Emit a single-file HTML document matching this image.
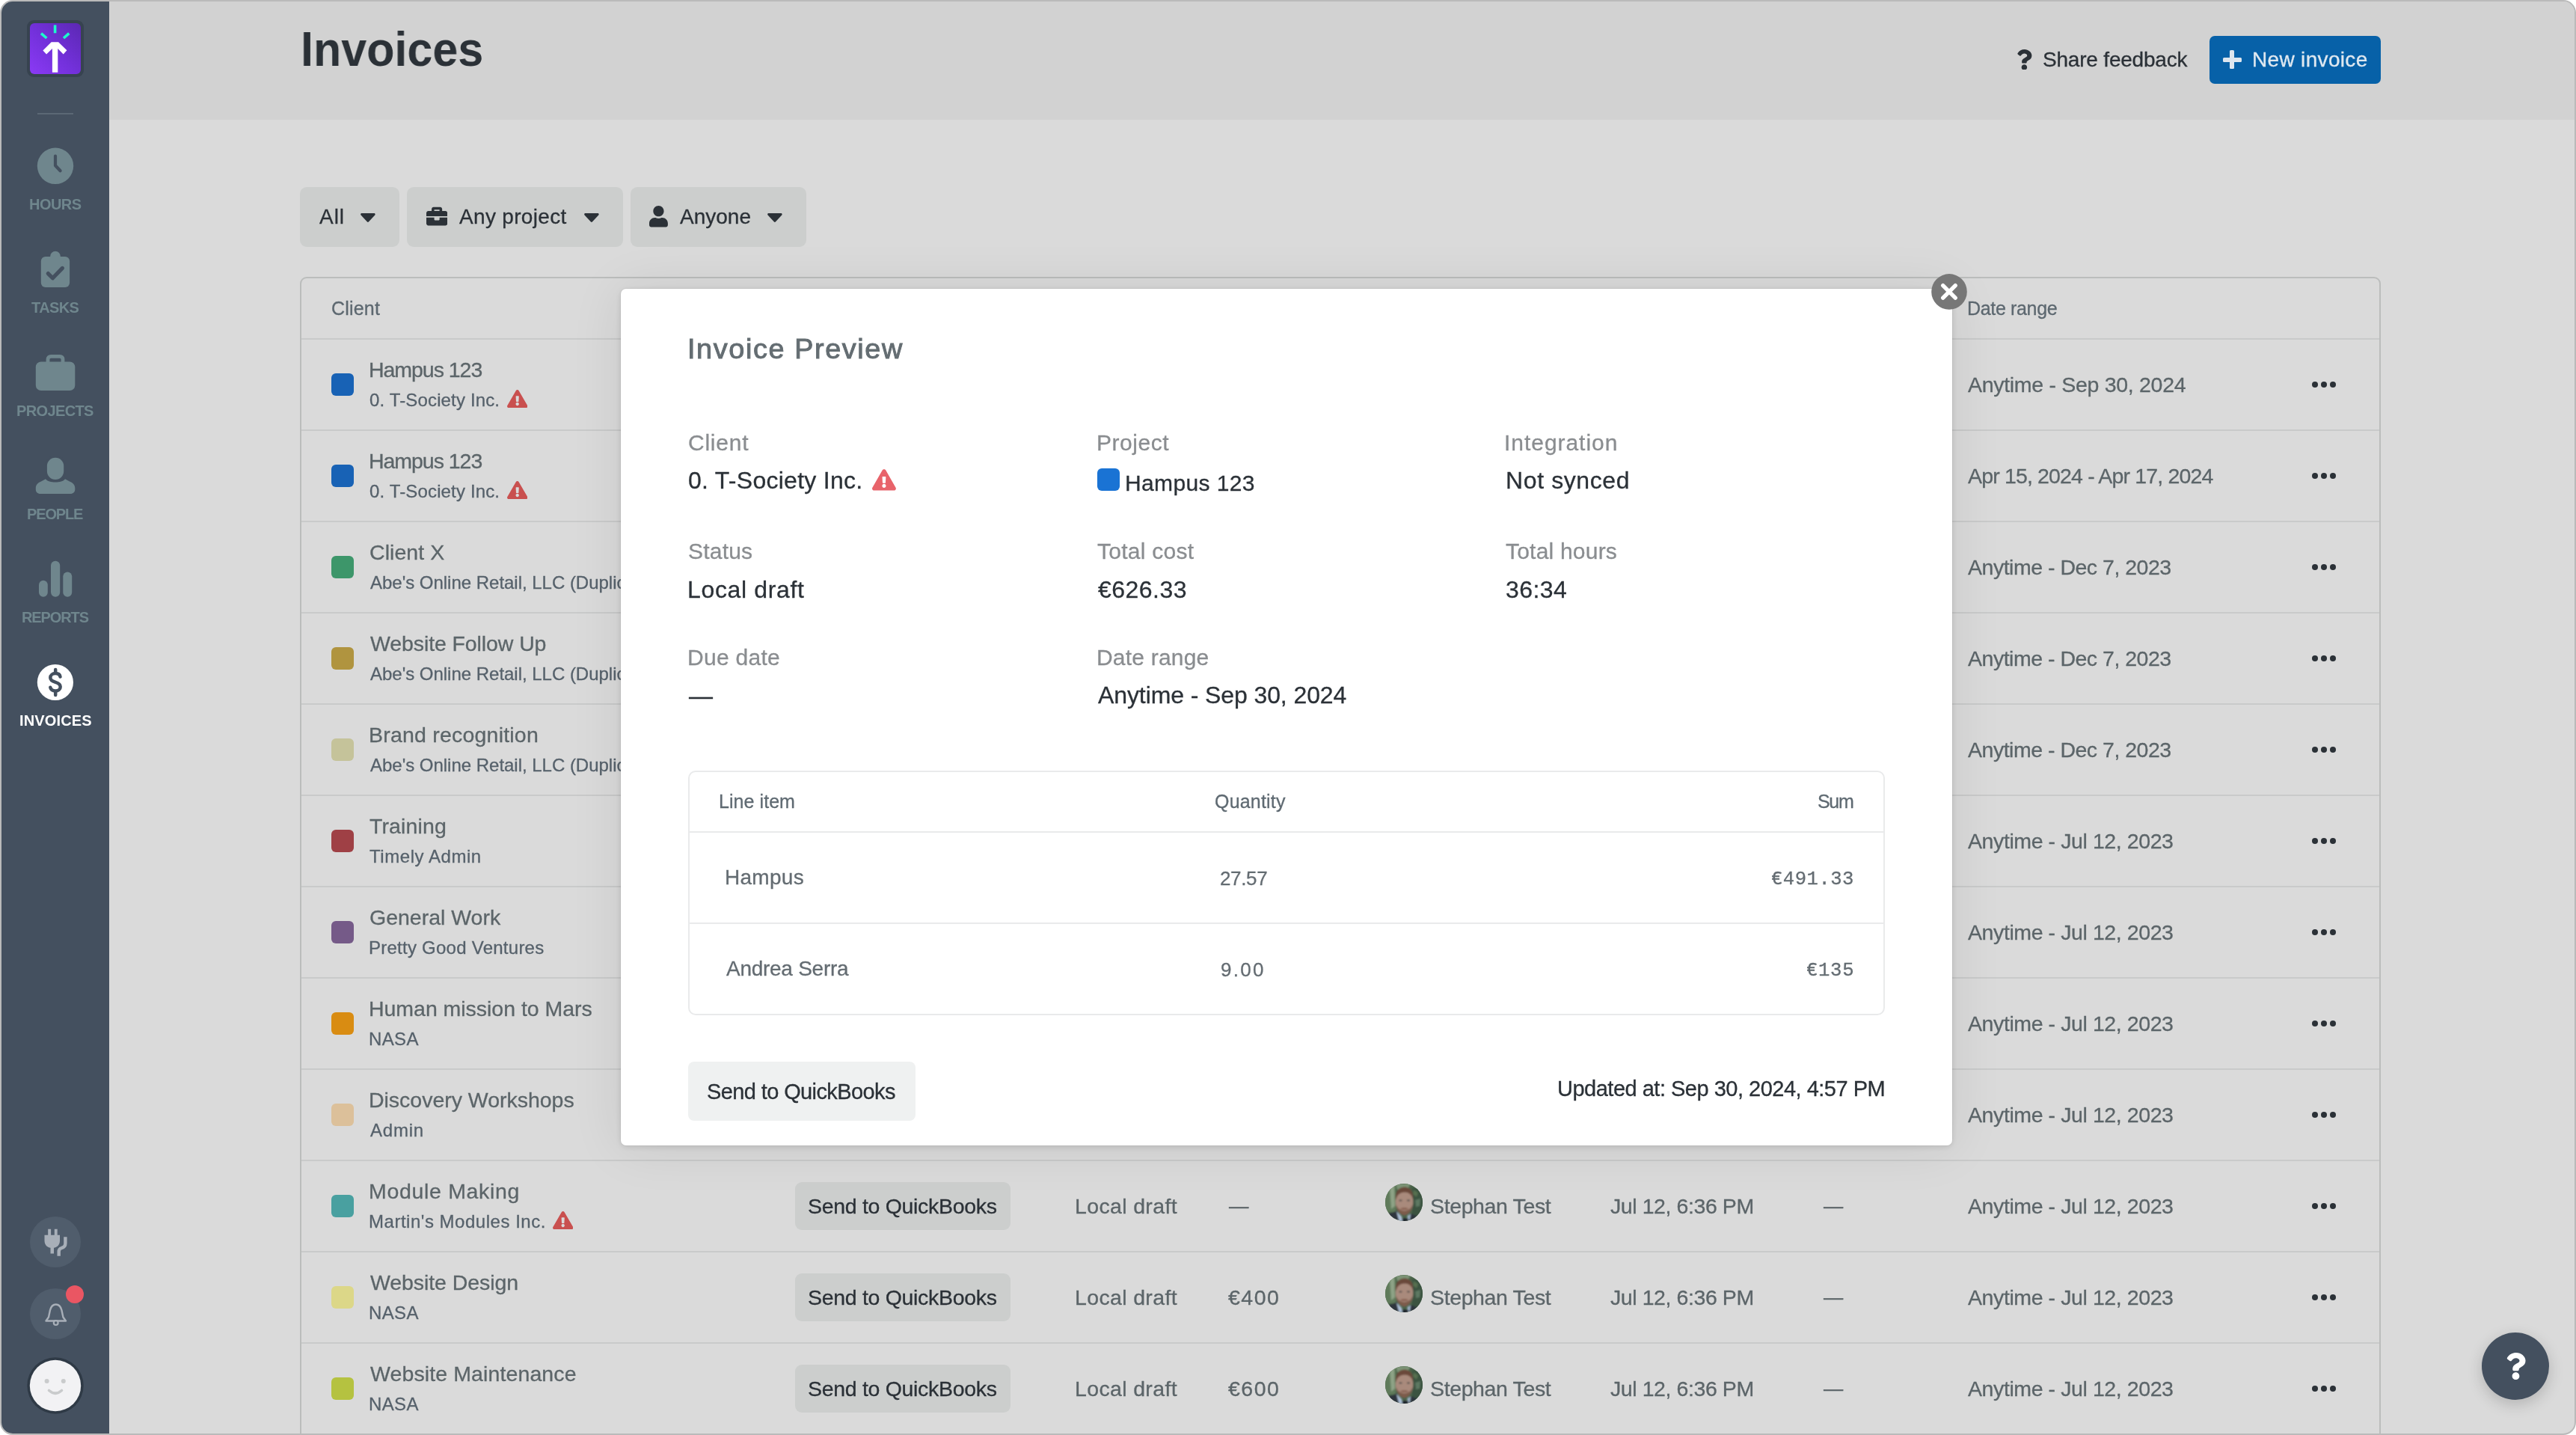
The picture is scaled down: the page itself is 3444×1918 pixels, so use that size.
<!DOCTYPE html>
<html><head><meta charset="utf-8"><title>Invoices</title>
<style>
html,body{margin:0;padding:0;background:#fff;}
body{width:3444px;height:1918px;overflow:hidden;position:relative;font-family:"Liberation Sans",sans-serif;}
.b{position:absolute;box-sizing:border-box;}
.t{position:absolute;white-space:nowrap;will-change:transform;-webkit-text-stroke:0.3px;}
.nb{-webkit-text-stroke:0;}
#frame{position:absolute;left:0;top:0;width:3444px;height:1918px;background:#bababa;border-radius:17px;}
#win{position:absolute;left:0;top:0;width:3444px;height:1918px;background:#dadada;clip-path:inset(2px round 15px);overflow:hidden;}
</style></head><body>
<div id="frame"></div>
<div id="win">

<div class="b" style="left:146px;top:0px;width:3298px;height:160px;background:#d2d2d2;"></div>
<div class="b" style="left:0px;top:0px;width:146px;height:1918px;background:#44505f;"></div>
<div class="b" style="left:36px;top:27px;width:76px;height:76px;background:#374350;border-radius:9px;"></div>
<div class="b" style="left:40px;top:31px;width:68px;height:68px;background:linear-gradient(45deg,#8b3af5 0%,#7431dc 45%,#5b28b3 100%);border-radius:6px;"></div>
<svg class="b" style="left:40px;top:31px" width="68" height="68" viewBox="0 0 68 68">
<g stroke="#1cfccb" stroke-width="3.6" fill="none"><path d="M33.6 2.5V13.3"/><path d="M15 13.6L22.4 20"/><path d="M52.3 13.6L45 20"/></g>
<path fill="#fff" d="M29.9 65.8V34L22.1 41.6 17.4 36.5 28.7 25.2H38.1L49.4 36.3 44.7 41.6 37.3 34V65.8Z"/>
</svg>
<div class="b" style="left:50px;top:150.5px;width:48px;height:2px;background:#5b6875;"></div>
<svg class="b" style="left:48px;top:196px" width="52" height="52" viewBox="0 0 52 52"><circle cx="26" cy="25.8" r="24.2" fill="#6f868d"/><path d="M26 12.5V25.2L32.6 32.2" stroke="#44505f" stroke-width="4.2" stroke-linecap="round" stroke-linejoin="round" fill="none"/></svg>
<div class="t nb" style="left:39.0px;top:260px;font-size:20px;line-height:26px;color:#6f868d;letter-spacing:-0.55px;font-weight:700;">HOURS</div>
<svg class="b" style="left:50px;top:332px" width="48" height="56" viewBox="0 0 48 56"><circle cx="24" cy="10.6" r="6.8" fill="#6f868d"/><rect x="4.8" y="11" width="38.3" height="41" rx="6" fill="#6f868d"/><path d="M14.3 33.6L20.4 39.8L33.4 26.4" stroke="#44505f" stroke-width="5.2" stroke-linecap="round" stroke-linejoin="round" fill="none"/></svg>
<div class="t nb" style="left:42.2px;top:398px;font-size:20px;line-height:26px;color:#6f868d;letter-spacing:-0.59px;font-weight:700;">TASKS</div>
<svg class="b" style="left:44px;top:470px" width="60" height="56" viewBox="0 0 60 56"><rect x="3.8" y="13.5" width="52.5" height="38.5" rx="7" fill="#6f868d"/><path d="M20 15V10.5Q20 6.3 24.2 6.3H35.8Q40 6.3 40 10.5V15" stroke="#6f868d" stroke-width="4.8" fill="none"/></svg>
<div class="t nb" style="left:22.0px;top:536px;font-size:20px;line-height:26px;color:#6f868d;letter-spacing:-0.62px;font-weight:700;">PROJECTS</div>
<svg class="b" style="left:44px;top:606px" width="60" height="58" viewBox="0 0 60 58"><path fill="#6f868d" d="M3.8 46.5C3.8 42 6.5 39.5 11 37.5L17 34.2C21 40 39 40 43 34.2L49 37.5C53.5 39.5 56.3 42 56.3 46.5V48C56.3 51.5 54 54 50 54H10C6 54 3.8 51.5 3.8 48Z"/><rect x="16.2" y="3" width="27.7" height="34.8" rx="13.8" fill="#44505f"/><rect x="18.9" y="5.7" width="22.3" height="29.2" rx="11.1" fill="#6f868d"/></svg>
<div class="t nb" style="left:36.1px;top:674px;font-size:20px;line-height:26px;color:#6f868d;letter-spacing:-1.14px;font-weight:700;">PEOPLE</div>
<svg class="b" style="left:48px;top:746px" width="52" height="56" viewBox="0 0 52 56"><rect x="4" y="29.7" width="11.8" height="22" rx="5.9" fill="#6f868d"/><rect x="20" y="3.7" width="12.2" height="48" rx="6.1" fill="#6f868d"/><rect x="36.3" y="18.4" width="11.9" height="33.3" rx="5.95" fill="#6f868d"/></svg>
<div class="t nb" style="left:28.9px;top:812px;font-size:20px;line-height:26px;color:#6f868d;letter-spacing:-1.11px;font-weight:700;">REPORTS</div>
<svg class="b" style="left:48px;top:886px" width="52" height="52" viewBox="0 0 52 52"><circle cx="25.9" cy="26" r="24.1" fill="#fff"/><g stroke="#44505f" stroke-width="4.5" stroke-linecap="round" fill="none"><path d="M32.5 18.5C32 15.5 29.5 14.1 26.2 14.1C22.3 14.1 19.3 16.3 19.3 19.8C19.3 23.3 22.5 24.8 26.2 25.9C30 27 32.7 28.6 32.7 32C32.7 35.5 29.8 37.5 26.2 37.5C22.6 37.5 20 35.8 19.3 32.8"/><path d="M26.2 8.9V12.5M26.2 39.3V43"/></g></svg>
<div class="t nb" style="left:25.8px;top:950px;font-size:20px;line-height:26px;color:#fff;letter-spacing:0.14px;font-weight:700;">INVOICES</div>
<svg class="b" style="left:40px;top:1626px" width="68" height="68" viewBox="0 0 68 68"><circle cx="34" cy="34" r="34" fill="#505d6c"/>
<path fill="#a8afb8" d="M24.2 16.7h3.9v8h4.7v-8h3.9v8h3.3v7.5c0 5.5-3.6 9-8 9.6v7.8h-4.5v-7.8c-4.4-.6-8-4.100-8-9.600v-7.500h4.700z"/>
<path d="M47.4 27.300v8.500q0 5-5 6.200q-3.700 1-3.700 5v5.800" stroke="#a8afb8" stroke-width="4.400" fill="none"/></svg>
<svg class="b" style="left:40px;top:1721.700px" width="68" height="68" viewBox="0 0 68 68"><circle cx="34" cy="34" r="34" fill="#505d6c"/>
<path d="M21.500 43.500L25 38.500L27 29Q29 21.500 34.700 21.500Q40.400 21.500 42.400 29L44.400 38.500L48 43.500Z" stroke="#a8afb8" stroke-width="2.400" fill="none" stroke-linejoin="round"/><circle cx="34.700" cy="46.100" r="2.900" stroke="#a8afb8" stroke-width="2.200" fill="#505d6c"/></svg>
<div class="b" style="left:88px;top:1718px;width:24px;height:24px;border-radius:12px;background:#ea5663"></div>
<svg class="b" style="left:34px;top:1812px" width="80" height="80" viewBox="0 0 80 80"><circle cx="40" cy="40" r="37.700" fill="#2f3a46"/><circle cx="40" cy="40" r="34.200" fill="#f2f2f4"/><circle cx="28.600" cy="34" r="3" fill="#c9cbcc"/><circle cx="50.800" cy="34" r="3" fill="#c9cbcc"/><path d="M31.500 46.500Q40 54 48.500 46.500" stroke="#c9cbcc" stroke-width="3.600" fill="none" stroke-linecap="round"/></svg>
<div class="t nb" style="left:401.7px;top:23px;font-size:65.6px;line-height:85px;color:#2b3137;transform:scaleX(0.9305);transform-origin:0 50%;font-weight:700;">Invoices</div>
<svg class="b" style="left:2695.8px;top:65.8px" width="20.77" height="27.70" viewBox="0 0 384 512"><path fill="#2b3137" d="M202.021 0C122.202 0 70.503 32.703 29.914 91.026c-7.363 10.58-5.093 25.086 5.178 32.874l43.138 32.709c10.373 7.865 25.132 6.026 33.253-4.148 25.049-31.381 43.63-49.449 82.757-49.449 30.764 0 68.816 19.799 68.816 49.631 0 22.552-18.617 34.134-48.993 51.164-35.423 19.86-82.299 44.576-82.299 106.405V320c0 13.255 10.745 24 24 24h72.471c13.255 0 24-10.745 24-24v-5.773c0-42.86 125.268-44.645 125.268-160.627C377.504 66.256 286.902 0 202.021 0zM192 373.459c-38.196 0-69.271 31.075-69.271 69.271 0 38.195 31.075 69.27 69.271 69.27s69.271-31.075 69.271-69.271-31.075-69.27-69.271-69.27z"/></svg>
<div class="t" style="left:2731.4px;top:62px;font-size:28px;line-height:36px;color:#2b3137;letter-spacing:-0.20px;">Share feedback</div>
<div class="b" style="left:2954px;top:48px;width:229px;height:64px;background:#0761a8;border-radius:7px;"></div>
<div class="b" style="left:2972px;top:76.5px;width:24.5px;height:6.2px;background:#dde6ef;border-radius:1.5px;"></div>
<div class="b" style="left:2981px;top:67.4px;width:6.2px;height:24.5px;background:#dde6ef;border-radius:1.5px;"></div>
<div class="t" style="left:3011.2px;top:62px;font-size:28px;line-height:36px;color:#dfe8f0;letter-spacing:0.33px;">New invoice</div>
<div class="b" style="left:401px;top:250px;width:133px;height:80px;background:#cccecd;border-radius:9px;"></div>
<div class="b" style="left:544px;top:250px;width:289px;height:80px;background:#cccecd;border-radius:9px;"></div>
<div class="b" style="left:843px;top:250px;width:235px;height:80px;background:#cccecd;border-radius:9px;"></div>
<div class="t" style="left:427.4px;top:272px;font-size:28px;line-height:36px;color:#2b3137;letter-spacing:0.96px;">All</div>
<div class="t" style="left:614.4px;top:272px;font-size:28px;line-height:36px;color:#2b3137;letter-spacing:0.32px;">Any project</div>
<div class="t" style="left:909.2px;top:272px;font-size:28px;line-height:36px;color:#2b3137;letter-spacing:0.01px;">Anyone</div>
<svg class="b" style="left:482px;top:284.7px" width="19.8" height="12" viewBox="9 192 302 169" preserveAspectRatio="none"><path fill="#2b3137" d="M31.3 192h257.3c17.800 0 26.700 21.500 14.100 34.100L174.100 354.800c-7.800 7.800-20.500 7.800-28.300 0L17.200 226.100C4.600 213.500 13.500 192 31.300 192z"/></svg>
<svg class="b" style="left:781.3px;top:284.7px" width="19.8" height="12" viewBox="9 192 302 169" preserveAspectRatio="none"><path fill="#2b3137" d="M31.3 192h257.3c17.800 0 26.700 21.500 14.100 34.100L174.100 354.800c-7.800 7.800-20.500 7.800-28.300 0L17.200 226.100C4.600 213.500 13.500 192 31.300 192z"/></svg>
<svg class="b" style="left:1025.8px;top:284.7px" width="19.8" height="12" viewBox="9 192 302 169" preserveAspectRatio="none"><path fill="#2b3137" d="M31.3 192h257.3c17.800 0 26.700 21.500 14.100 34.100L174.100 354.800c-7.800 7.800-20.500 7.800-28.300 0L17.200 226.100C4.600 213.500 13.500 192 31.300 192z"/></svg>
<svg class="b" style="left:570px;top:275.250px" width="28.200" height="28.200" viewBox="0 0 512 512"><path fill="#2b3137" d="M320 336c0 8.840-7.160 16-16 16h-96c-8.840 0-16-7.160-16-16v-48H0v144c0 25.600 22.400 48 48 48h416c25.600 0 48-22.400 48-48V288H320v48zm144-208h-80V80c0-25.600-22.400-48-48-48H176c-25.600 0-48 22.400-48 48v48H48c-25.600 0-48 22.400-48 48v80h512v-80c0-25.600-22.400-48-48-48zm-144 0H192V96h128v32z"/></svg>
<svg class="b" style="left:868.300px;top:275.300px" width="24.900" height="28.500" viewBox="0 0 448 512"><path fill="#2b3137" d="M224 256c70.700 0 128-57.300 128-128S294.700 0 224 0 96 57.300 96 128s57.300 128 128 128zm89.600 32h-16.700c-22.200 10.200-46.900 16-72.900 16s-50.600-5.800-72.900-16h-16.700C60.200 288 0 348.200 0 422.400V464c0 26.500 21.500 48 48 48h352c26.500 0 48-21.500 48-48v-41.600c0-74.200-60.200-134.400-134.400-134.400z"/></svg>
<div class="b" style="left:401px;top:370px;width:2782px;height:1700px;border:2px solid #bbbdbc;border-radius:9px;"></div>
<div class="t" style="left:442.6px;top:396px;font-size:25px;line-height:32px;color:#5d6870;letter-spacing:0.20px;">Client</div>
<div class="t" style="left:2630.2px;top:396px;font-size:25px;line-height:32px;color:#5d6870;letter-spacing:-0.34px;">Date range</div>
<div class="b" style="left:403px;top:452px;width:2778px;height:2px;background:#c9caca;"></div>
<div class="b" style="left:443px;top:499px;width:30px;height:30px;background:#1862b5;border-radius:6px;"></div>
<div class="t" style="left:492.6px;top:476px;font-size:28.5px;line-height:37px;color:#5c6569;letter-spacing:-1.04px;">Hampus 123</div>
<div class="t" style="left:493.6px;top:519px;font-size:24px;line-height:31px;color:#56616b;letter-spacing:0.15px;">0. T-Society Inc.</div>
<svg class="b" style="left:677.5px;top:521px" width="27.4" height="24.3" viewBox="0 0 576 512"><path fill="#c9504f" d="M569.5 440C588 472 564.8 512 527.9 512H48.1c-36.9 0-60-40.1-41.6-72L246.4 24c18.5-32 64.7-32 83.2 0l239.9 416zM288 354c-25.4 0-46 20.6-46 46s20.6 46 46 46 46-20.6 46-46-20.6-46-46-46zm-43.7-165.3l7.4 136c.3 6.4 5.6 11.3 12 11.3h48.5c6.4 0 11.6-5 12-11.3l7.4-136c.4-6.9-5.1-12.7-12-12.7h-63.4c-6.9 0-12.4 5.8-12 12.7z"/></svg>
<div class="t" style="left:2631.2px;top:496px;font-size:28.5px;line-height:37px;color:#5c6569;letter-spacing:-0.30px;">Anytime - Sep 30, 2024</div>
<div class="b" style="left:3090.6px;top:509.6px;width:8.8px;height:8.8px;border-radius:50%;background:#2b3137"></div>
<div class="b" style="left:3102.5px;top:509.6px;width:8.8px;height:8.8px;border-radius:50%;background:#2b3137"></div>
<div class="b" style="left:3114.5px;top:509.6px;width:8.8px;height:8.8px;border-radius:50%;background:#2b3137"></div>
<div class="b" style="left:403px;top:574px;width:2778px;height:2px;background:#c9caca;"></div>
<div class="b" style="left:443px;top:621px;width:30px;height:30px;background:#1862b5;border-radius:6px;"></div>
<div class="t" style="left:492.6px;top:598px;font-size:28.5px;line-height:37px;color:#5c6569;letter-spacing:-1.04px;">Hampus 123</div>
<div class="t" style="left:493.6px;top:641px;font-size:24px;line-height:31px;color:#56616b;letter-spacing:0.15px;">0. T-Society Inc.</div>
<svg class="b" style="left:677.5px;top:643px" width="27.4" height="24.3" viewBox="0 0 576 512"><path fill="#c9504f" d="M569.5 440C588 472 564.8 512 527.9 512H48.1c-36.9 0-60-40.1-41.6-72L246.4 24c18.5-32 64.7-32 83.2 0l239.9 416zM288 354c-25.4 0-46 20.6-46 46s20.6 46 46 46 46-20.6 46-46-20.6-46-46-46zm-43.7-165.3l7.4 136c.3 6.4 5.6 11.3 12 11.3h48.5c6.4 0 11.6-5 12-11.3l7.4-136c.4-6.9-5.1-12.7-12-12.7h-63.4c-6.9 0-12.4 5.8-12 12.7z"/></svg>
<div class="t" style="left:2631.2px;top:618px;font-size:28.5px;line-height:37px;color:#5c6569;letter-spacing:-0.84px;">Apr 15, 2024 - Apr 17, 2024</div>
<div class="b" style="left:3090.6px;top:631.6px;width:8.8px;height:8.8px;border-radius:50%;background:#2b3137"></div>
<div class="b" style="left:3102.5px;top:631.6px;width:8.8px;height:8.8px;border-radius:50%;background:#2b3137"></div>
<div class="b" style="left:3114.5px;top:631.6px;width:8.8px;height:8.8px;border-radius:50%;background:#2b3137"></div>
<div class="b" style="left:403px;top:696px;width:2778px;height:2px;background:#c9caca;"></div>
<div class="b" style="left:443px;top:743px;width:30px;height:30px;background:#3d966a;border-radius:6px;"></div>
<div class="t" style="left:493.6px;top:720px;font-size:28.5px;line-height:37px;color:#5c6569;letter-spacing:0.06px;">Client X</div>
<div class="t" style="left:494.5px;top:763px;font-size:24px;line-height:31px;color:#56616b;letter-spacing:-0.02px;">Abe&#x27;s Online Retail, LLC (Duplicate)</div>
<div class="t" style="left:2631.2px;top:740px;font-size:28.5px;line-height:37px;color:#5c6569;letter-spacing:-0.49px;">Anytime - Dec 7, 2023</div>
<div class="b" style="left:3090.6px;top:753.6px;width:8.8px;height:8.8px;border-radius:50%;background:#2b3137"></div>
<div class="b" style="left:3102.5px;top:753.6px;width:8.8px;height:8.8px;border-radius:50%;background:#2b3137"></div>
<div class="b" style="left:3114.5px;top:753.6px;width:8.8px;height:8.8px;border-radius:50%;background:#2b3137"></div>
<div class="b" style="left:403px;top:818px;width:2778px;height:2px;background:#c9caca;"></div>
<div class="b" style="left:443px;top:865px;width:30px;height:30px;background:#b0943f;border-radius:6px;"></div>
<div class="t" style="left:494.9px;top:842px;font-size:28.5px;line-height:37px;color:#5c6569;letter-spacing:-0.10px;">Website Follow Up</div>
<div class="t" style="left:494.5px;top:885px;font-size:24px;line-height:31px;color:#56616b;letter-spacing:-0.02px;">Abe&#x27;s Online Retail, LLC (Duplicate)</div>
<div class="t" style="left:2631.2px;top:862px;font-size:28.5px;line-height:37px;color:#5c6569;letter-spacing:-0.49px;">Anytime - Dec 7, 2023</div>
<div class="b" style="left:3090.6px;top:875.6px;width:8.8px;height:8.8px;border-radius:50%;background:#2b3137"></div>
<div class="b" style="left:3102.5px;top:875.6px;width:8.8px;height:8.8px;border-radius:50%;background:#2b3137"></div>
<div class="b" style="left:3114.5px;top:875.6px;width:8.8px;height:8.8px;border-radius:50%;background:#2b3137"></div>
<div class="b" style="left:403px;top:940px;width:2778px;height:2px;background:#c9caca;"></div>
<div class="b" style="left:443px;top:987px;width:30px;height:30px;background:#c5c39a;border-radius:6px;"></div>
<div class="t" style="left:492.6px;top:964px;font-size:28.5px;line-height:37px;color:#5c6569;letter-spacing:0.21px;">Brand recognition</div>
<div class="t" style="left:494.5px;top:1007px;font-size:24px;line-height:31px;color:#56616b;letter-spacing:-0.02px;">Abe&#x27;s Online Retail, LLC (Duplicate)</div>
<div class="t" style="left:2631.2px;top:984px;font-size:28.5px;line-height:37px;color:#5c6569;letter-spacing:-0.49px;">Anytime - Dec 7, 2023</div>
<div class="b" style="left:3090.6px;top:997.6px;width:8.8px;height:8.8px;border-radius:50%;background:#2b3137"></div>
<div class="b" style="left:3102.5px;top:997.6px;width:8.8px;height:8.8px;border-radius:50%;background:#2b3137"></div>
<div class="b" style="left:3114.5px;top:997.6px;width:8.8px;height:8.8px;border-radius:50%;background:#2b3137"></div>
<div class="b" style="left:403px;top:1062px;width:2778px;height:2px;background:#c9caca;"></div>
<div class="b" style="left:443px;top:1109px;width:30px;height:30px;background:#9f4045;border-radius:6px;"></div>
<div class="t" style="left:494.4px;top:1086px;font-size:28.5px;line-height:37px;color:#5c6569;letter-spacing:0.12px;">Training</div>
<div class="t" style="left:494.1px;top:1129px;font-size:24px;line-height:31px;color:#56616b;letter-spacing:0.55px;">Timely Admin</div>
<div class="t" style="left:2631.2px;top:1106px;font-size:28.5px;line-height:37px;color:#5c6569;letter-spacing:-0.41px;">Anytime - Jul 12, 2023</div>
<div class="b" style="left:3090.6px;top:1119.6px;width:8.8px;height:8.8px;border-radius:50%;background:#2b3137"></div>
<div class="b" style="left:3102.5px;top:1119.6px;width:8.8px;height:8.8px;border-radius:50%;background:#2b3137"></div>
<div class="b" style="left:3114.5px;top:1119.6px;width:8.8px;height:8.8px;border-radius:50%;background:#2b3137"></div>
<div class="b" style="left:403px;top:1184px;width:2778px;height:2px;background:#c9caca;"></div>
<div class="b" style="left:443px;top:1231px;width:30px;height:30px;background:#755a88;border-radius:6px;"></div>
<div class="t" style="left:493.6px;top:1208px;font-size:28.5px;line-height:37px;color:#5c6569;letter-spacing:-0.01px;">General Work</div>
<div class="t" style="left:492.6px;top:1251px;font-size:24px;line-height:31px;color:#56616b;letter-spacing:0.25px;">Pretty Good Ventures</div>
<div class="t" style="left:2631.2px;top:1228px;font-size:28.5px;line-height:37px;color:#5c6569;letter-spacing:-0.41px;">Anytime - Jul 12, 2023</div>
<div class="b" style="left:3090.6px;top:1241.6px;width:8.8px;height:8.8px;border-radius:50%;background:#2b3137"></div>
<div class="b" style="left:3102.5px;top:1241.6px;width:8.8px;height:8.8px;border-radius:50%;background:#2b3137"></div>
<div class="b" style="left:3114.5px;top:1241.6px;width:8.8px;height:8.8px;border-radius:50%;background:#2b3137"></div>
<div class="b" style="left:403px;top:1306px;width:2778px;height:2px;background:#c9caca;"></div>
<div class="b" style="left:443px;top:1353px;width:30px;height:30px;background:#d98c12;border-radius:6px;"></div>
<div class="t" style="left:492.6px;top:1330px;font-size:28.5px;line-height:37px;color:#5c6569;letter-spacing:-0.03px;">Human mission to Mars</div>
<div class="t" style="left:492.6px;top:1373px;font-size:24px;line-height:31px;color:#56616b;letter-spacing:0.37px;">NASA</div>
<div class="t" style="left:2631.2px;top:1350px;font-size:28.5px;line-height:37px;color:#5c6569;letter-spacing:-0.41px;">Anytime - Jul 12, 2023</div>
<div class="b" style="left:3090.6px;top:1363.6px;width:8.8px;height:8.8px;border-radius:50%;background:#2b3137"></div>
<div class="b" style="left:3102.5px;top:1363.6px;width:8.8px;height:8.8px;border-radius:50%;background:#2b3137"></div>
<div class="b" style="left:3114.5px;top:1363.6px;width:8.8px;height:8.8px;border-radius:50%;background:#2b3137"></div>
<div class="b" style="left:403px;top:1428px;width:2778px;height:2px;background:#c9caca;"></div>
<div class="b" style="left:443px;top:1475px;width:30px;height:30px;background:#dcc09a;border-radius:6px;"></div>
<div class="t" style="left:492.6px;top:1452px;font-size:28.5px;line-height:37px;color:#5c6569;letter-spacing:-0.02px;">Discovery Workshops</div>
<div class="t" style="left:494.5px;top:1495px;font-size:24px;line-height:31px;color:#56616b;letter-spacing:0.79px;">Admin</div>
<div class="t" style="left:2631.2px;top:1472px;font-size:28.5px;line-height:37px;color:#5c6569;letter-spacing:-0.41px;">Anytime - Jul 12, 2023</div>
<div class="b" style="left:3090.6px;top:1485.6px;width:8.8px;height:8.8px;border-radius:50%;background:#2b3137"></div>
<div class="b" style="left:3102.5px;top:1485.6px;width:8.8px;height:8.8px;border-radius:50%;background:#2b3137"></div>
<div class="b" style="left:3114.5px;top:1485.6px;width:8.8px;height:8.8px;border-radius:50%;background:#2b3137"></div>
<div class="b" style="left:403px;top:1550px;width:2778px;height:2px;background:#c9caca;"></div>
<div class="b" style="left:443px;top:1597px;width:30px;height:30px;background:#49a0a0;border-radius:6px;"></div>
<div class="t" style="left:492.6px;top:1574px;font-size:28.5px;line-height:37px;color:#5c6569;letter-spacing:0.68px;">Module Making</div>
<div class="t" style="left:492.6px;top:1617px;font-size:24px;line-height:31px;color:#56616b;letter-spacing:0.52px;">Martin&#x27;s Modules Inc.</div>
<svg class="b" style="left:738.8px;top:1619px" width="27.4" height="24.3" viewBox="0 0 576 512"><path fill="#c9504f" d="M569.5 440C588 472 564.8 512 527.9 512H48.1c-36.9 0-60-40.1-41.6-72L246.4 24c18.5-32 64.7-32 83.2 0l239.9 416zM288 354c-25.4 0-46 20.6-46 46s20.6 46 46 46 46-20.6 46-46-20.6-46-46-46zm-43.7-165.3l7.4 136c.3 6.4 5.6 11.3 12 11.3h48.5c6.4 0 11.6-5 12-11.3l7.4-136c.4-6.9-5.1-12.7-12-12.7h-63.4c-6.9 0-12.4 5.8-12 12.7z"/></svg>
<div class="t" style="left:2631.2px;top:1594px;font-size:28.5px;line-height:37px;color:#5c6569;letter-spacing:-0.41px;">Anytime - Jul 12, 2023</div>
<div class="b" style="left:3090.6px;top:1607.6px;width:8.8px;height:8.8px;border-radius:50%;background:#2b3137"></div>
<div class="b" style="left:3102.5px;top:1607.6px;width:8.8px;height:8.8px;border-radius:50%;background:#2b3137"></div>
<div class="b" style="left:3114.5px;top:1607.6px;width:8.8px;height:8.8px;border-radius:50%;background:#2b3137"></div>
<div class="b" style="left:1063px;top:1580px;width:287.5px;height:64px;background:#cccecd;border-radius:9px;"></div>
<div class="t" style="left:1080.2px;top:1594px;font-size:28.5px;line-height:37px;color:#2b3137;letter-spacing:-0.31px;">Send to QuickBooks</div>
<div class="t" style="left:1437.4px;top:1594px;font-size:28.5px;line-height:37px;color:#5c6569;letter-spacing:0.35px;">Local draft</div>
<div class="t" style="left:1642.6px;top:1595px;font-size:26.4px;line-height:34px;color:#5c6569;">—</div>
<svg class="b" style="left:1852px;top:1582px" width="50" height="50" viewBox="0 0 50 50"><defs><clipPath id="av1607"><circle cx="25" cy="25" r="25"/></clipPath><filter id="bl1607" x="-20%" y="-20%" width="140%" height="140%"><feGaussianBlur stdDeviation="0.9"/></filter></defs><g clip-path="url(#av1607)"><rect width="50" height="50" fill="#4a6349"/><g filter="url(#bl1607)"><rect x="-2" y="-2" width="16" height="40" fill="#5f7a5a"/><path d="M6 4L12 2L13 30L8 34Z" fill="#8ea386"/><path d="M14 0H34L30 8H16Z" fill="#7d9477"/><rect x="36" y="6" width="16" height="40" fill="#3a5240"/><path d="M40 22L47 20L46 30L41 31Z" fill="#5d7862"/><path d="M38 8L44 12L42 18L37 14Z" fill="#56704f"/><path d="M-2 52L5 40L16 36.500L20 52Z" fill="#2e343c"/><path d="M52 52L46 45L34 40L30 52Z" fill="#2e343c"/><path d="M15 37L22 44L24 52H19Z" fill="#adc0d8"/><path d="M29.500 43L34 40.500L33 48L30 50Z" fill="#9fb2c9"/><path d="M22.500 46.500H31L30 52H23Z" fill="#1f242a"/><ellipse cx="25.500" cy="24.500" rx="11.800" ry="16.500" fill="#a98a7c"/><path d="M13.800 22Q12.500 5.500 25.500 4.500Q38 5 37.300 21Q35 11.500 25.500 11.500Q16.500 11.500 13.800 22Z" fill="#6a4a3a"/><path d="M14.500 28Q16 41 25.500 42.800Q35 41 36.500 28Q33.500 36 25.500 36.500Q17.500 36 14.500 28Z" fill="#7d5b4c"/><ellipse cx="25.500" cy="33.500" rx="5" ry="1.600" fill="#8a6355"/><ellipse cx="20.500" cy="22.500" rx="2.200" ry="0.900" fill="#4d4a48"/><ellipse cx="31" cy="22.500" rx="2.200" ry="0.900" fill="#4d4a48"/></g></g></svg>
<div class="t" style="left:1911.5px;top:1594px;font-size:28.5px;line-height:37px;color:#5c6569;letter-spacing:-0.38px;">Stephan Test</div>
<div class="t" style="left:2153.3px;top:1594px;font-size:28.5px;line-height:37px;color:#5c6569;letter-spacing:-0.42px;">Jul 12, 6:36 PM</div>
<div class="t" style="left:2437.6px;top:1595px;font-size:26.2px;line-height:34px;color:#5c6569;">—</div>
<div class="b" style="left:403px;top:1672px;width:2778px;height:2px;background:#c9caca;"></div>
<div class="b" style="left:443px;top:1719px;width:30px;height:30px;background:#dcd788;border-radius:6px;"></div>
<div class="t" style="left:494.9px;top:1696px;font-size:28.5px;line-height:37px;color:#5c6569;letter-spacing:-0.08px;">Website Design</div>
<div class="t" style="left:492.6px;top:1739px;font-size:24px;line-height:31px;color:#56616b;letter-spacing:0.37px;">NASA</div>
<div class="t" style="left:2631.2px;top:1716px;font-size:28.5px;line-height:37px;color:#5c6569;letter-spacing:-0.41px;">Anytime - Jul 12, 2023</div>
<div class="b" style="left:3090.6px;top:1729.6px;width:8.8px;height:8.8px;border-radius:50%;background:#2b3137"></div>
<div class="b" style="left:3102.5px;top:1729.6px;width:8.8px;height:8.8px;border-radius:50%;background:#2b3137"></div>
<div class="b" style="left:3114.5px;top:1729.6px;width:8.8px;height:8.8px;border-radius:50%;background:#2b3137"></div>
<div class="b" style="left:1063px;top:1702px;width:287.5px;height:64px;background:#cccecd;border-radius:9px;"></div>
<div class="t" style="left:1080.2px;top:1716px;font-size:28.5px;line-height:37px;color:#2b3137;letter-spacing:-0.31px;">Send to QuickBooks</div>
<div class="t" style="left:1437.4px;top:1716px;font-size:28.5px;line-height:37px;color:#5c6569;letter-spacing:0.35px;">Local draft</div>
<div class="t" style="left:1642.4px;top:1716px;font-size:28.5px;line-height:37px;color:#5c6569;letter-spacing:1.51px;">€400</div>
<svg class="b" style="left:1852px;top:1704px" width="50" height="50" viewBox="0 0 50 50"><defs><clipPath id="av1729"><circle cx="25" cy="25" r="25"/></clipPath><filter id="bl1729" x="-20%" y="-20%" width="140%" height="140%"><feGaussianBlur stdDeviation="0.9"/></filter></defs><g clip-path="url(#av1729)"><rect width="50" height="50" fill="#4a6349"/><g filter="url(#bl1729)"><rect x="-2" y="-2" width="16" height="40" fill="#5f7a5a"/><path d="M6 4L12 2L13 30L8 34Z" fill="#8ea386"/><path d="M14 0H34L30 8H16Z" fill="#7d9477"/><rect x="36" y="6" width="16" height="40" fill="#3a5240"/><path d="M40 22L47 20L46 30L41 31Z" fill="#5d7862"/><path d="M38 8L44 12L42 18L37 14Z" fill="#56704f"/><path d="M-2 52L5 40L16 36.500L20 52Z" fill="#2e343c"/><path d="M52 52L46 45L34 40L30 52Z" fill="#2e343c"/><path d="M15 37L22 44L24 52H19Z" fill="#adc0d8"/><path d="M29.500 43L34 40.500L33 48L30 50Z" fill="#9fb2c9"/><path d="M22.500 46.500H31L30 52H23Z" fill="#1f242a"/><ellipse cx="25.500" cy="24.500" rx="11.800" ry="16.500" fill="#a98a7c"/><path d="M13.800 22Q12.500 5.500 25.500 4.500Q38 5 37.300 21Q35 11.500 25.500 11.500Q16.500 11.500 13.800 22Z" fill="#6a4a3a"/><path d="M14.500 28Q16 41 25.500 42.800Q35 41 36.500 28Q33.500 36 25.500 36.500Q17.500 36 14.500 28Z" fill="#7d5b4c"/><ellipse cx="25.500" cy="33.500" rx="5" ry="1.600" fill="#8a6355"/><ellipse cx="20.500" cy="22.500" rx="2.200" ry="0.900" fill="#4d4a48"/><ellipse cx="31" cy="22.500" rx="2.200" ry="0.900" fill="#4d4a48"/></g></g></svg>
<div class="t" style="left:1911.5px;top:1716px;font-size:28.5px;line-height:37px;color:#5c6569;letter-spacing:-0.38px;">Stephan Test</div>
<div class="t" style="left:2153.3px;top:1716px;font-size:28.5px;line-height:37px;color:#5c6569;letter-spacing:-0.42px;">Jul 12, 6:36 PM</div>
<div class="t" style="left:2437.6px;top:1717px;font-size:26.2px;line-height:34px;color:#5c6569;">—</div>
<div class="b" style="left:403px;top:1794px;width:2778px;height:2px;background:#c9caca;"></div>
<div class="b" style="left:443px;top:1841px;width:30px;height:30px;background:#b5c240;border-radius:6px;"></div>
<div class="t" style="left:494.9px;top:1818px;font-size:28.5px;line-height:37px;color:#5c6569;letter-spacing:0.11px;">Website Maintenance</div>
<div class="t" style="left:492.6px;top:1861px;font-size:24px;line-height:31px;color:#56616b;letter-spacing:0.37px;">NASA</div>
<div class="t" style="left:2631.2px;top:1838px;font-size:28.5px;line-height:37px;color:#5c6569;letter-spacing:-0.41px;">Anytime - Jul 12, 2023</div>
<div class="b" style="left:3090.6px;top:1851.6px;width:8.8px;height:8.8px;border-radius:50%;background:#2b3137"></div>
<div class="b" style="left:3102.5px;top:1851.6px;width:8.8px;height:8.8px;border-radius:50%;background:#2b3137"></div>
<div class="b" style="left:3114.5px;top:1851.6px;width:8.8px;height:8.8px;border-radius:50%;background:#2b3137"></div>
<div class="b" style="left:1063px;top:1824px;width:287.5px;height:64px;background:#cccecd;border-radius:9px;"></div>
<div class="t" style="left:1080.2px;top:1838px;font-size:28.5px;line-height:37px;color:#2b3137;letter-spacing:-0.31px;">Send to QuickBooks</div>
<div class="t" style="left:1437.4px;top:1838px;font-size:28.5px;line-height:37px;color:#5c6569;letter-spacing:0.35px;">Local draft</div>
<div class="t" style="left:1642.4px;top:1838px;font-size:28.5px;line-height:37px;color:#5c6569;letter-spacing:1.51px;">€600</div>
<svg class="b" style="left:1852px;top:1826px" width="50" height="50" viewBox="0 0 50 50"><defs><clipPath id="av1851"><circle cx="25" cy="25" r="25"/></clipPath><filter id="bl1851" x="-20%" y="-20%" width="140%" height="140%"><feGaussianBlur stdDeviation="0.9"/></filter></defs><g clip-path="url(#av1851)"><rect width="50" height="50" fill="#4a6349"/><g filter="url(#bl1851)"><rect x="-2" y="-2" width="16" height="40" fill="#5f7a5a"/><path d="M6 4L12 2L13 30L8 34Z" fill="#8ea386"/><path d="M14 0H34L30 8H16Z" fill="#7d9477"/><rect x="36" y="6" width="16" height="40" fill="#3a5240"/><path d="M40 22L47 20L46 30L41 31Z" fill="#5d7862"/><path d="M38 8L44 12L42 18L37 14Z" fill="#56704f"/><path d="M-2 52L5 40L16 36.500L20 52Z" fill="#2e343c"/><path d="M52 52L46 45L34 40L30 52Z" fill="#2e343c"/><path d="M15 37L22 44L24 52H19Z" fill="#adc0d8"/><path d="M29.500 43L34 40.500L33 48L30 50Z" fill="#9fb2c9"/><path d="M22.500 46.500H31L30 52H23Z" fill="#1f242a"/><ellipse cx="25.500" cy="24.500" rx="11.800" ry="16.500" fill="#a98a7c"/><path d="M13.800 22Q12.500 5.500 25.500 4.500Q38 5 37.300 21Q35 11.500 25.500 11.500Q16.500 11.500 13.800 22Z" fill="#6a4a3a"/><path d="M14.500 28Q16 41 25.500 42.800Q35 41 36.500 28Q33.500 36 25.500 36.500Q17.500 36 14.500 28Z" fill="#7d5b4c"/><ellipse cx="25.500" cy="33.500" rx="5" ry="1.600" fill="#8a6355"/><ellipse cx="20.500" cy="22.500" rx="2.200" ry="0.900" fill="#4d4a48"/><ellipse cx="31" cy="22.500" rx="2.200" ry="0.900" fill="#4d4a48"/></g></g></svg>
<div class="t" style="left:1911.5px;top:1838px;font-size:28.5px;line-height:37px;color:#5c6569;letter-spacing:-0.38px;">Stephan Test</div>
<div class="t" style="left:2153.3px;top:1838px;font-size:28.5px;line-height:37px;color:#5c6569;letter-spacing:-0.42px;">Jul 12, 6:36 PM</div>
<div class="t" style="left:2437.6px;top:1839px;font-size:26.2px;line-height:34px;color:#5c6569;">—</div>
<div class="b" style="left:3318px;top:1780.500px;width:90px;height:90px;border-radius:50%;background:#44505f;box-shadow:0 6px 20px rgba(0,0,0,.18)"></div>
<svg class="b" style="left:3349.9px;top:1808.1px" width="27.00" height="36.00" viewBox="0 0 384 512"><path fill="#fff" d="M202.021 0C122.202 0 70.503 32.703 29.914 91.026c-7.363 10.58-5.093 25.086 5.178 32.874l43.138 32.709c10.373 7.865 25.132 6.026 33.253-4.148 25.049-31.381 43.63-49.449 82.757-49.449 30.764 0 68.816 19.799 68.816 49.631 0 22.552-18.617 34.134-48.993 51.164-35.423 19.86-82.299 44.576-82.299 106.405V320c0 13.255 10.745 24 24 24h72.471c13.255 0 24-10.745 24-24v-5.773c0-42.86 125.268-44.645 125.268-160.627C377.504 66.256 286.902 0 202.021 0zM192 373.459c-38.196 0-69.271 31.075-69.271 69.271 0 38.195 31.075 69.27 69.271 69.27s69.271-31.075 69.271-69.271-31.075-69.27-69.271-69.27z"/></svg>
<div class="b" style="left:830px;top:385.500px;width:1780px;height:1145.500px;background:#fff;border-radius:7px;box-shadow:0 0 0 1px rgba(0,0,0,.04),0 2px 10px rgba(0,0,0,.12),0 2px 70px rgba(0,0,0,.09);"></div>
<div class="t" style="left:918.9px;top:442px;font-size:37.8px;line-height:49px;color:#646d72;letter-spacing:1.61px;-webkit-text-stroke:1.0px #646d72;">Invoice Preview</div>
<div class="t" style="left:919.9px;top:572px;font-size:30px;line-height:39px;color:#8a8d90;letter-spacing:0.76px;">Client</div>
<div class="t" style="left:1465.5px;top:572px;font-size:30px;line-height:39px;color:#8a8d90;letter-spacing:0.52px;">Project</div>
<div class="t" style="left:2011.1px;top:572px;font-size:30px;line-height:39px;color:#8a8d90;letter-spacing:0.96px;">Integration</div>
<div class="t" style="left:920.0px;top:717px;font-size:30px;line-height:39px;color:#8a8d90;letter-spacing:0.21px;">Status</div>
<div class="t" style="left:1467.3px;top:717px;font-size:30px;line-height:39px;color:#8a8d90;letter-spacing:0.26px;">Total cost</div>
<div class="t" style="left:2013.2px;top:717px;font-size:30px;line-height:39px;color:#8a8d90;letter-spacing:0.21px;">Total hours</div>
<div class="t" style="left:918.9px;top:859px;font-size:30px;line-height:39px;color:#8a8d90;letter-spacing:0.29px;">Due date</div>
<div class="t" style="left:1465.5px;top:859px;font-size:30px;line-height:39px;color:#8a8d90;letter-spacing:0.20px;">Date range</div>
<div class="t" style="left:920.1px;top:621px;font-size:32px;line-height:42px;color:#2b3137;letter-spacing:0.27px;">0. T-Society Inc.</div>
<svg class="b" style="left:1166.2px;top:626.8px" width="31.9" height="28.9" viewBox="0 0 576 512"><path fill="#e8636a" d="M569.5 440C588 472 564.8 512 527.9 512H48.1c-36.9 0-60-40.1-41.6-72L246.4 24c18.5-32 64.7-32 83.2 0l239.9 416zM288 354c-25.4 0-46 20.6-46 46s20.6 46 46 46 46-20.6 46-46-20.6-46-46-46zm-43.7-165.3l7.4 136c.3 6.4 5.6 11.3 12 11.3h48.5c6.4 0 11.6-5 12-11.3l7.4-136c.4-6.9-5.1-12.7-12-12.7h-63.4c-6.9 0-12.4 5.8-12 12.7z"/></svg>
<div class="b" style="left:1467.3px;top:626.1px;width:29.5px;height:29.6px;background:#1a73d4;border-radius:6px;"></div>
<div class="t" style="left:1504.3px;top:626px;font-size:30px;line-height:39px;color:#2b3137;letter-spacing:0.38px;">Hampus 123</div>
<div class="t" style="left:2012.6px;top:621px;font-size:32px;line-height:42px;color:#2b3137;letter-spacing:0.61px;">Not synced</div>
<div class="t" style="left:918.8px;top:767px;font-size:32px;line-height:42px;color:#2b3137;letter-spacing:0.65px;">Local draft</div>
<div class="t" style="left:1468.4px;top:767px;font-size:32px;line-height:42px;color:#2b3137;letter-spacing:0.47px;">€626.33</div>
<div class="t" style="left:2013.3px;top:767px;font-size:32px;line-height:42px;color:#2b3137;letter-spacing:0.45px;">36:34</div>
<div class="t" style="left:921.4px;top:909px;font-size:32px;line-height:42px;color:#2b3137;">—</div>
<div class="t" style="left:1467.9px;top:908px;font-size:32px;line-height:42px;color:#2b3137;letter-spacing:-0.10px;">Anytime - Sep 30, 2024</div>
<div class="b" style="left:920px;top:1029.500px;width:1600px;height:327.500px;border:2px solid #e9eaeb;border-radius:10px;"></div>
<div class="b" style="left:922px;top:1111px;width:1596px;height:2px;background:#e9eaeb;"></div>
<div class="b" style="left:922px;top:1232.5px;width:1596px;height:2px;background:#e9eaeb;"></div>
<div class="t" style="left:960.8px;top:1055px;font-size:25px;line-height:32px;color:#5f6a72;letter-spacing:0.06px;">Line item</div>
<div class="t" style="left:1623.8px;top:1055px;font-size:25px;line-height:32px;color:#5f6a72;letter-spacing:0.20px;">Quantity</div>
<div class="t" style="left:2429.9px;top:1055px;font-size:25px;line-height:32px;color:#5f6a72;letter-spacing:-1.31px;">Sum</div>
<div class="t" style="left:968.6px;top:1155px;font-size:28px;line-height:36px;color:#646c72;letter-spacing:0.29px;">Hampus</div>
<div class="t" style="left:1631.4px;top:1157px;font-size:26px;line-height:34px;color:#646c72;letter-spacing:-0.34px;">27.57</div>
<div class="t" style="left:2368.1px;top:1159px;font-size:25.6px;line-height:33px;color:#646c72;letter-spacing:0.49px;font-family:'Liberation Mono',monospace;">€491.33</div>
<div class="t" style="left:970.8px;top:1277px;font-size:28px;line-height:36px;color:#646c72;letter-spacing:-0.27px;">Andrea Serra</div>
<div class="t" style="left:1631.5px;top:1279px;font-size:26px;line-height:34px;color:#646c72;letter-spacing:2.28px;">9.00</div>
<div class="t" style="left:2415.0px;top:1281px;font-size:25.6px;line-height:33px;color:#646c72;letter-spacing:0.70px;font-family:'Liberation Mono',monospace;">€135</div>
<div class="b" style="left:920px;top:1419px;width:304px;height:79px;background:#eff1f1;border-radius:8px;"></div>
<div class="t" style="left:945.4px;top:1440px;font-size:29px;line-height:38px;color:#2b3137;letter-spacing:-0.61px;">Send to QuickBooks</div>
<div class="t" style="left:2081.8px;top:1436px;font-size:29px;line-height:38px;color:#2b3137;letter-spacing:-0.50px;">Updated at: Sep 30, 2024, 4:57 PM</div>
<svg class="b" style="left:2582px;top:366px" width="48" height="48" viewBox="0 0 48 48"><circle cx="24" cy="23.900" r="23.800" fill="#777"/><path d="M15.7 15.7L32.2 32.2M32.2 15.7L15.7 32.2" stroke="#fff" stroke-width="5.4" stroke-linecap="round"/></svg>
</div></body></html>
